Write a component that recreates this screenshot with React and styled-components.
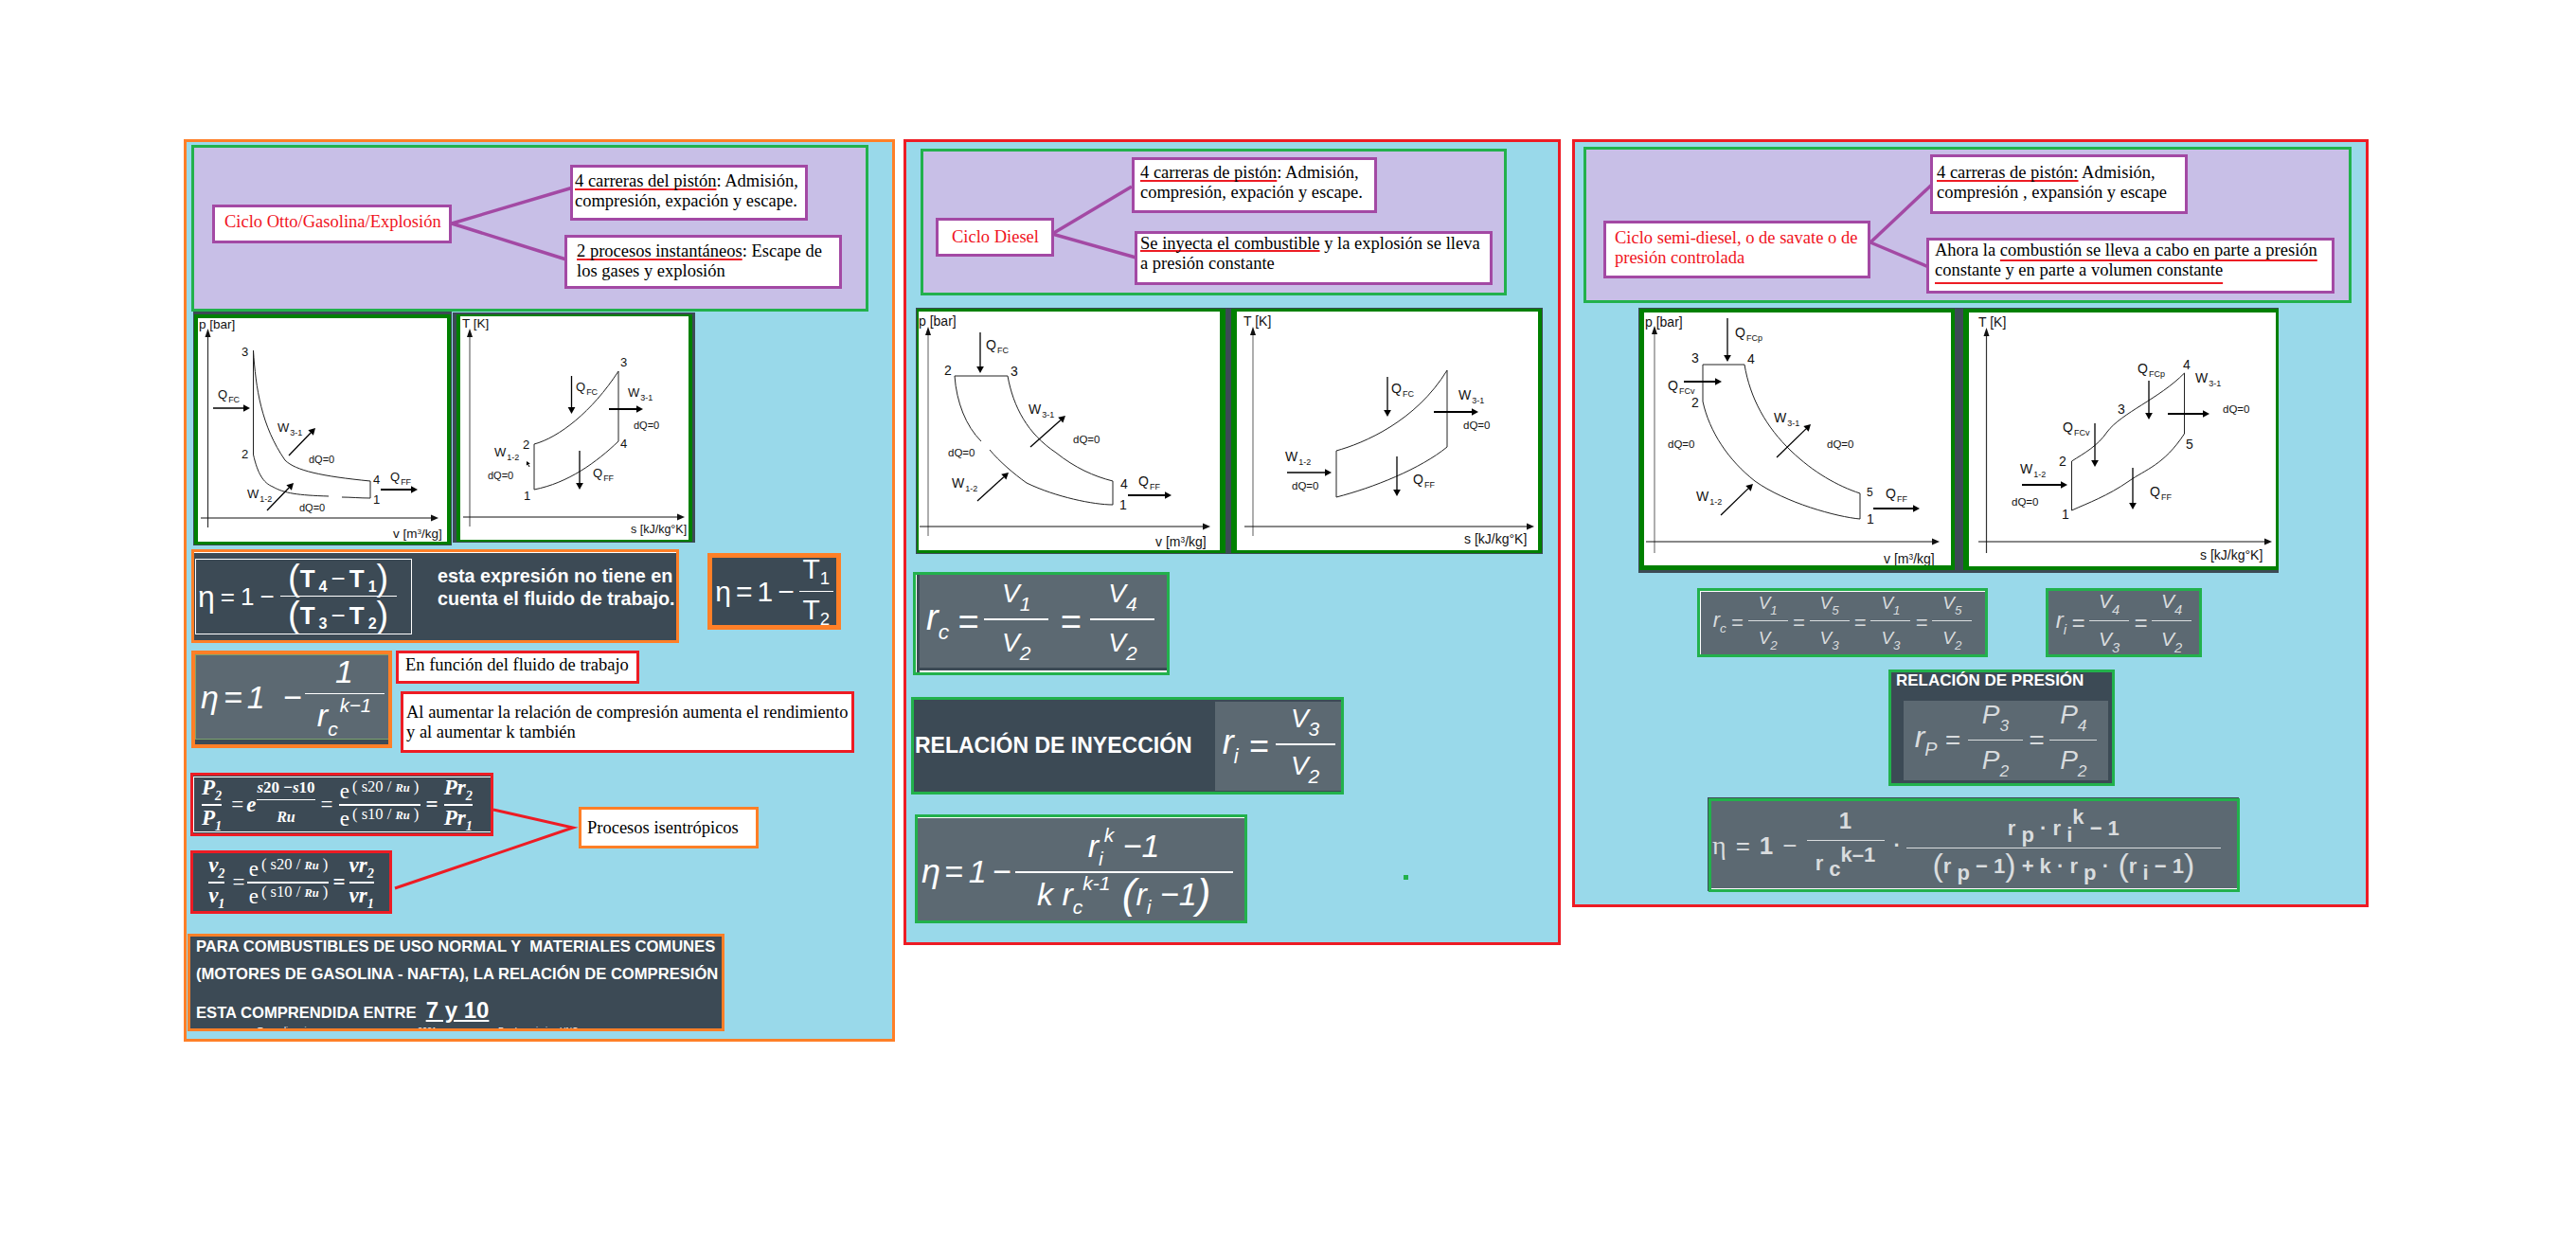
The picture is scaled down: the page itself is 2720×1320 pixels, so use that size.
import React from "react";
import styled, { createGlobalStyle } from "styled-components";

const ORANGE = "#ff7f27";
const RED = "#ed1c24";
const GREEN = "#22b14c";
const PURPLE = "#a349a4";
const DARK = "#3c4a55";
const LIGHT = "#5c6972";
const GRAY = "#d9dcde";

const GlobalStyle = createGlobalStyle`
  body {
    margin: 0;
    background: #ffffff;
    font-family: "Liberation Serif", serif;
  }
`;

const Board = styled.div`
  display: flex;
  align-items: flex-start;
  width: 2720px;
  height: 1320px;
  padding: 147px 0 0 194px;
  box-sizing: border-box;
  overflow: hidden;
`;

const Panel = styled.section`
  position: relative;
  flex: none;
  width: ${(p) => p.$w}px;
  height: ${(p) => p.$h}px;
  margin-left: ${(p) => p.$ml || 0}px;
  box-sizing: border-box;
  background: #99d9ea;
  border: 3px solid ${(p) => p.$color};
`;

const Header = styled.div`
  position: relative;
  width: ${(p) => p.$w}px;
  height: ${(p) => p.$h}px;
  margin: ${(p) => p.$mt}px 0 0 ${(p) => p.$ml}px;
  box-sizing: border-box;
  background: #c8bfe7;
  border: 3px solid ${GREEN};
`;

const Links = styled.svg`
  position: absolute;
  top: 0;
  left: 0;
  pointer-events: none;
`;

const MapNode = styled.div`
  position: absolute;
  left: ${(p) => p.$x}px;
  top: ${(p) => p.$y}px;
  width: ${(p) => p.$w}px;
  height: ${(p) => p.$h}px;
  box-sizing: border-box;
  padding: ${(p) => p.$pad};
  background: #ffffff;
  border: 3px solid ${PURPLE};
  font-size: 18.5px;
  line-height: 21px;
  color: ${(p) => (p.$title ? "#f0141e" : "#000000")};
  white-space: nowrap;
`;

const Marked = styled.span`
  text-decoration: underline ${RED} 2px;
  text-underline-offset: ${(p) => p.$offset || 2}px;
  text-decoration-skip-ink: none;
`;

const Row = styled.div`
  display: flex;
  align-items: flex-start;
  margin: ${(p) => p.$mt || 0}px 0 0 ${(p) => p.$ml || 0}px;
`;

const Column = styled.div`
  display: flex;
  flex-direction: column;
  align-items: flex-start;
  margin-left: ${(p) => p.$ml || 0}px;
`;

const GraphFrame = styled.div`
  flex: none;
  margin-top: ${(p) => p.$mt || 0}px;
  margin-left: ${(p) => p.$ml || 0}px;
  padding: ${(p) => p.$pad};
  background: ${DARK};
`;

const GraphCanvas = styled.div`
  background: #ffffff;
  border-style: solid;
  border-color: #008000;
  border-width: ${(p) => p.$edge};
  svg {
    display: block;
  }
  text {
    font-family: "Liberation Sans", sans-serif;
    fill: #111111;
  }
`;

const EquationBox = styled.div`
  flex: none;
  display: flex;
  align-items: ${(p) => p.$align || "center"};
  justify-content: ${(p) => p.$justify || "center"};
  width: ${(p) => p.$w}px;
  height: ${(p) => p.$h}px;
  margin-top: ${(p) => p.$mt || 0}px;
  margin-left: ${(p) => p.$ml || 0}px;
  padding: ${(p) => p.$pad || 0};
  box-sizing: border-box;
  overflow: hidden;
  background: ${(p) => p.$bg || DARK};
  border: ${(p) => p.$bw || 3}px solid ${(p) => p.$color};
  box-shadow: ${(p) => p.$shadow || "none"};
  color: #ffffff;
`;

const Outline = styled.div`
  flex: none;
  display: flex;
  align-items: center;
  justify-content: ${(p) => p.$justify || "center"};
  width: ${(p) => p.$w}px;
  height: ${(p) => p.$h}px;
  margin-left: ${(p) => p.$ml || 0}px;
  padding: ${(p) => p.$pad || 0};
  box-sizing: border-box;
  background: ${(p) => p.$bg || "transparent"};
  border: 1px solid ${(p) => p.$color || "#ffffff"};
`;

const Note = styled.div`
  flex: none;
  width: ${(p) => p.$w}px;
  height: ${(p) => p.$h}px;
  margin-top: ${(p) => p.$mt || 0}px;
  margin-left: ${(p) => p.$ml || 0}px;
  padding: ${(p) => p.$pad};
  box-sizing: border-box;
  background: #ffffff;
  border: 3px solid ${(p) => p.$color};
  font-size: 18.5px;
  line-height: 21px;
  color: #000000;
  white-space: nowrap;
`;

const Remark = styled.p`
  margin: 0 0 20px 27px;
  font: bold 19.8px/24px "Liberation Sans", sans-serif;
  white-space: nowrap;
`;

const BoldLabel = styled.div`
  flex: none;
  margin: ${(p) => p.$margin || 0};
  font: bold ${(p) => p.$size}px/1 "Liberation Sans", sans-serif;
  white-space: nowrap;
`;

const Banner = styled.div`
  position: relative;
  width: 567px;
  height: 103px;
  margin: 21px 0 0 1px;
  padding-left: 6px;
  box-sizing: border-box;
  overflow: hidden;
  background: ${DARK};
  border: 3px solid ${ORANGE};
  color: #ffffff;
  font: bold 16.6px "Liberation Sans", sans-serif;
  white-space: pre;
`;

const BannerLine = styled.div`
  height: ${(p) => p.$h}px;
  line-height: ${(p) => p.$h}px;
`;

const Range = styled.span`
  font-size: 24px;
  text-decoration: underline;
  margin-left: 10px;
`;

const Footer = styled.div`
  position: absolute;
  left: 71px;
  bottom: -7px;
  display: flex;
  font: 9px/10px "Liberation Sans", sans-serif;
`;

const FooterItem = styled.span`
  width: ${(p) => p.$w}px;
`;

const Speck = styled.div`
  position: absolute;
  left: 525px;
  top: 774px;
  width: 5px;
  height: 5px;
  background: ${GREEN};
`;

/* formula parts */
const Formula = styled.div`
  display: flex;
  align-items: center;
  flex: none;
  gap: ${(p) => p.$gap || 0}px;
  color: ${(p) => p.$color || "#ffffff"};
  font-family: ${(p) => (p.$serif ? '"Liberation Serif", serif' : '"Liberation Sans", sans-serif')};
  font-size: ${(p) => p.$size}px;
  font-style: ${(p) => (p.$italic ? "italic" : "normal")};
  font-weight: ${(p) => (p.$bold ? "bold" : "normal")};
  line-height: 1;
  white-space: pre;
`;

const Term = styled.span`
  display: inline-block;
  white-space: pre;
  margin: ${(p) => p.$margin || 0};
  font-size: ${(p) => p.$size || "inherit"};
  font-weight: ${(p) => (p.$thin ? "normal" : "inherit")};
  font-family: ${(p) => (p.$serif ? '"Liberation Serif", serif' : "inherit")};
`;

const Sub = styled.span`
  font-size: ${(p) => p.$s || 0.62}em;
  vertical-align: ${(p) => p.$v || -0.45}em;
  margin-left: ${(p) => p.$ml || 0}px;
`;

const Sup = styled.span`
  font-size: ${(p) => p.$s || 0.62}em;
  vertical-align: ${(p) => p.$v || 0.75}em;
  margin-left: ${(p) => p.$ml || 0}px;
`;

const Frac = styled.span`
  display: inline-flex;
  flex-direction: column;
  align-items: center;
  flex: none;
  min-width: ${(p) => p.$w || 0}px;
  margin: ${(p) => p.$margin || 0};
  font-size: ${(p) => p.$size || "inherit"};
`;

const Top = styled.span`
  display: block;
  padding-bottom: ${(p) => p.$gap ?? 3}px;
  white-space: pre;
`;

const Bottom = styled.span`
  display: block;
  align-self: stretch;
  text-align: center;
  padding-top: ${(p) => p.$gap ?? 3}px;
  border-top: ${(p) => p.$line || 2}px solid currentColor;
  white-space: pre;
`;

const Paren = styled.span`
  font-size: ${(p) => p.$size}px;
  font-weight: normal;
  vertical-align: ${(p) => p.$v || -0.08}em;
`;

/* chart parts */
const Arrow = ({ from, to, width = 1.3, head = 7 }) => {
  const a = Math.atan2(to[1] - from[1], to[0] - from[0]);
  const bx = to[0] - Math.cos(a) * head;
  const by = to[1] - Math.sin(a) * head;
  const nx = -Math.sin(a) * head * 0.55;
  const ny = Math.cos(a) * head * 0.55;
  return (
    <g>
      <line x1={from[0]} y1={from[1]} x2={bx} y2={by} stroke="#000" strokeWidth={width} />
      <polygon points={`${to[0]},${to[1]} ${bx + nx},${by + ny} ${bx - nx},${by - ny}`} fill="#000" />
    </g>
  );
};

const Label = ({ x, y, main, sub, size = 13, subSize = 9 }) => (
  <text x={x} y={y} fontSize={size}>
    {main}
    {sub && (
      <tspan dx="1" dy="4" fontSize={subSize}>
        {sub}
      </tspan>
    )}
  </text>
);

const Curve = ({ d, color = "#222", width = 1 }) => <path d={d} fill="none" stroke={color} strokeWidth={width} />;

const Axes = ({ vx, vTop, vBottom, hy, hLeft, hRight, color = "#333", w = 1.2 }) => (
  <g>
    <line x1={vx} y1={vTop + 5} x2={vx} y2={vBottom} stroke={color} strokeWidth={w} />
    <polygon points={`${vx},${vTop} ${vx - 3},${vTop + 9} ${vx + 3},${vTop + 9}`} fill="#111" />
    <line x1={hLeft} y1={hy} x2={hRight - 5} y2={hy} stroke="#111" strokeWidth="1" />
    <polygon points={`${hRight},${hy} ${hRight - 8},${hy - 3.5} ${hRight - 8},${hy + 3.5}`} fill="#111" />
  </g>
);

const Graph = ({ pad, edge, box, mt, ml, children }) => (
  <GraphFrame $pad={pad} $mt={mt} $ml={ml}>
    <GraphCanvas $edge={edge}>
      <svg width={box[2]} height={box[3]} viewBox={box.join(" ")}>
        {children}
      </svg>
    </GraphCanvas>
  </GraphFrame>
);

const VolumeLabel = ({ x, y, size }) => (
  <text x={x} y={y} fontSize={size}>
    v [m<tspan dy="-4" fontSize={size * 0.6}>3</tspan>
    <tspan dy="4">/kg]</tspan>
  </text>
);

const OttoPressure = () => (
  <Graph pad="3px 1px 1px 1px" edge="4px 4px 3px 4px" box={[209, 336, 263, 236]}>
    <Axes vx={219.5} vTop={347} vBottom={557} hy={547} hLeft={212} hRight={463} />
    <Label x={210} y={347} main="p [bar]" size={13.5} />
    <Label x={255} y={376} main="3" />
    <Label x={255} y={484} main="2" />
    <Label x={394} y={511} main="4" />
    <Label x={394} y={532} main="1" />
    <Curve d="M267.5 370V480" />
    <Curve d="M267.5 370C270 410 276 450 301 486C312 497 340 503 391 508V526C380 526 370 525 361 525" />
    <Curve d="M267.5 480C272 500 278 510 288 514C300 521 315 523 347 524" />
    <Label x={230} y={421} main="Q" sub="FC" />
    <Arrow from={[225, 431]} to={[264, 431]} width={1.5} />
    <Label x={293} y={456} main="W" sub="3-1" />
    <Arrow from={[305, 481]} to={[333, 452]} />
    <Label x={326} y={489} main="dQ=0" size={11} />
    <Label x={412} y={508} main="Q" sub="FF" />
    <Arrow from={[402, 517]} to={[441, 517]} width={2} />
    <Label x={261} y={526} main="W" sub="1-2" />
    <Arrow from={[282, 539]} to={[310, 510]} />
    <Label x={316} y={540} main="dQ=0" size={11} />
    <VolumeLabel x={415} y={568} size={13.5} />
  </Graph>
);

const OttoTemperature = () => (
  <Graph pad="2px 3px 1px 4px" edge="2px 4px 2px 4px" box={[486, 334, 241, 236]} ml={1} mt={1}>
    <Axes vx={496} vTop={347} vBottom={556} hy={546} hLeft={489} hRight={723} color="#666" />
    <Label x={488} y={346} main="T [K]" size={13.5} />
    <Label x={655} y={387} main="3" />
    <Label x={552} y={474} main="2" />
    <Label x={655} y={473} main="4" />
    <Label x={553} y={528} main="1" />
    <Curve d="M564 469C590 462 625 435 653 392V466C630 488 600 510 564 517Z" />
    <Label x={608} y={413} main="Q" sub="FC" />
    <Arrow from={[603.5, 397]} to={[603.5, 437]} />
    <Label x={663} y={419} main="W" sub="3-1" />
    <Arrow from={[643, 432]} to={[679, 432]} width={2} />
    <Label x={669} y={453} main="dQ=0" size={11} />
    <Label x={522} y={482} main="W" sub="1-2" />
    <Arrow from={[559, 493]} to={[556, 487]} width={1} head={4} />
    <Label x={515} y={506} main="dQ=0" size={11} />
    <Arrow from={[612, 476]} to={[612, 517]} />
    <Label x={626} y={504} main="Q" sub="FF" />
    <Label x={666} y={563} main="s [kJ/kg°K]" size={12.5} />
  </Graph>
);

const DieselPressure = () => (
  <Graph pad="1px 4px 1px 1px" edge="3px 6px 3px 2px" box={[970, 329, 318, 252]}>
    <Axes vx={980} vTop={345} vBottom={566} hy={556} hLeft={971} hRight={1278} color="#777" />
    <Label x={970} y={344} main="p [bar]" size={14} />
    <Label x={997} y={396} main="2" size={14} />
    <Label x={1067} y={397} main="3" size={14} />
    <Curve d="M1008 397H1064C1070 430 1085 458 1115 478C1135 494 1155 503 1175 508V533C1155 533 1115 525 1084 510C1070 500 1055 487 1045 475" />
    <Curve d="M1008 397C1010 425 1020 450 1036 466" />
    <Arrow from={[1035, 351]} to={[1035, 394]} />
    <Label x={1041} y={369} main="Q" sub="FC" size={14} />
    <Label x={1086} y={437} main="W" sub="3-1" size={14} />
    <Arrow from={[1088, 472]} to={[1125, 439]} />
    <Label x={1133} y={468} main="dQ=0" size={11.5} />
    <Label x={1001} y={482} main="dQ=0" size={11.5} />
    <Label x={1005} y={515} main="W" sub="1-2" size={14} />
    <Arrow from={[1032, 529]} to={[1065, 499]} />
    <Label x={1183} y={516} main="4" size={14} />
    <Label x={1182} y={538} main="1" size={14} />
    <Label x={1202} y={513} main="Q" sub="FF" size={14} />
    <Arrow from={[1191, 523]} to={[1237, 523]} width={2} />
    <VolumeLabel x={1220} y={577} size={14} />
  </Graph>
);

const DieselTemperature = () => (
  <Graph pad="1px 1px 1px 2px" edge="3px 4px 3px 6px" box={[1306, 329, 318, 252]}>
    <Axes vx={1323} vTop={345} vBottom={566} hy={556} hLeft={1314} hRight={1620} color="#777" />
    <Label x={1313} y={344} main="T [K]" size={14} />
    <Curve d="M1411 476C1440 468 1495 445 1528 391V472C1500 495 1450 515 1411 525Z" />
    <Arrow from={[1465, 398]} to={[1465, 440]} />
    <Label x={1469} y={415} main="Q" sub="FC" size={14} />
    <Label x={1540} y={422} main="W" sub="3-1" size={14} />
    <Arrow from={[1514, 435]} to={[1561, 435]} width={2} />
    <Label x={1545} y={453} main="dQ=0" size={11.5} />
    <Label x={1357} y={487} main="W" sub="1-2" size={14} />
    <Arrow from={[1359, 499]} to={[1406, 499]} />
    <Label x={1364} y={517} main="dQ=0" size={11.5} />
    <Arrow from={[1475, 482]} to={[1475, 524]} />
    <Label x={1492} y={511} main="Q" sub="FF" size={14} />
    <Label x={1546} y={574} main="s [kJ/kg°K]" size={14} />
  </Graph>
);

const SemiPressure = () => (
  <Graph pad="1px 8px 3px 1px" edge="4px 4px 5px 5px" box={[1736, 329, 324, 267]}>
    <Axes vx={1747} vTop={343} vBottom={583} hy={571} hLeft={1738} hRight={2048} color="#777" />
    <Label x={1737} y={344} main="p [bar]" size={14} />
    <Label x={1786} y={382} main="3" size={14} />
    <Label x={1845} y={383} main="4" size={14} />
    <Label x={1786} y={429} main="2" size={14} />
    <Curve d="M1798 423V384H1842C1848 420 1865 450 1891 475C1915 498 1940 512 1964 520V547C1940 545 1885 530 1853 507C1825 485 1805 455 1798 423" />
    <Arrow from={[1824, 335]} to={[1824, 381]} />
    <Label x={1832} y={355} main="Q" sub="FCp" size={14} />
    <Label x={1761} y={411} main="Q" sub="FCv" size={14} />
    <Arrow from={[1778, 402]} to={[1818, 402]} width={2} />
    <Label x={1873} y={445} main="W" sub="3-1" size={14} />
    <Arrow from={[1876, 482]} to={[1912, 447]} />
    <Label x={1929} y={472} main="dQ=0" size={11.5} />
    <Label x={1761} y={472} main="dQ=0" size={11.5} />
    <Label x={1791} y={528} main="W" sub="1-2" size={14} />
    <Arrow from={[1817, 543]} to={[1851, 510]} />
    <Label x={1971} y={523} main="5" size={12} />
    <Label x={1971} y={552} main="1" size={14} />
    <Label x={1991} y={525} main="Q" sub="FF" size={14} />
    <Arrow from={[1978, 536]} to={[2027, 536]} width={2} />
    <VolumeLabel x={1989} y={594} size={14} />
  </Graph>
);

const SemiTemperature = () => (
  <Graph pad="1px 0 3px 1px" edge="4px 3px 4px 6px" box={[2079, 329, 324, 268]}>
    <Axes vx={2097.5} vTop={345} vBottom={583} hy={571} hLeft={2089} hRight={2399} />
    <Label x={2089} y={344} main="T [K]" size={14} />
    <Curve d="M2187.5 486C2200 478 2215 470 2225 455C2240 435 2280 420 2306.5 393V457C2285 490 2265 495 2248 507C2225 523 2205 530 2187.5 538Z" />
    <Label x={2305} y={389} main="4" size={14} />
    <Label x={2257} y={393} main="Q" sub="FCp" size={14} />
    <Arrow from={[2269, 401]} to={[2269, 442]} />
    <Label x={2318} y={403} main="W" sub="3-1" size={14} />
    <Label x={2236} y={436} main="3" size={14} />
    <Arrow from={[2289, 436]} to={[2333, 436]} width={2} />
    <Label x={2347} y={435} main="dQ=0" size={11.5} />
    <Label x={2178} y={455} main="Q" sub="FCv" size={14} />
    <Arrow from={[2212, 446]} to={[2212, 492]} />
    <Label x={2174} y={491} main="2" size={14} />
    <Label x={2308} y={473} main="5" size={14} />
    <Label x={2133} y={499} main="W" sub="1-2" size={14} />
    <Arrow from={[2135, 511]} to={[2183, 511]} width={2} />
    <Label x={2124} y={533} main="dQ=0" size={11.5} />
    <Label x={2177} y={547} main="1" size={14} />
    <Arrow from={[2252, 493]} to={[2252, 537]} />
    <Label x={2270} y={523} main="Q" sub="FF" size={14} />
    <Label x={2323} y={590} main="s [kJ/kg°K]" size={14} />
  </Graph>
);

const ConceptLinks = ({ w, h, lines }) => (
  <Links width={w} height={h} viewBox={`0 0 ${w} ${h}`}>
    {lines.map((l) => (
      <line key={l.join()} x1={l[0]} y1={l[1]} x2={l[2]} y2={l[3]} stroke={PURPLE} strokeWidth="3.5" />
    ))}
  </Links>
);

const TEPair = ({ a, b }) => (
  <>
    <Paren $size={38}>(</Paren>
    <b>T</b>
    <Sub $ml={4} $v={-0.3}>
      <b>{a}</b>
    </Sub>
    <Term $margin="0 4px">−</Term>
    <b>T</b>
    <Sub $ml={4} $v={-0.3}>
      <b>{b}</b>
    </Sub>
    <Paren $size={38}>)</Paren>
  </>
);

const ExpPart = ({ a }) => (
  <>
    e
    <Sup $s={0.72} $v={0.45} $ml={3}>
      ( {a} / <i><b style={{ fontSize: "0.75em" }}>Ru</b></i> )
    </Sup>
  </>
);

const IsoWrap = styled.div`
  position: relative;
  display: flex;
  align-items: flex-start;
  height: 149px;
  margin: 21px 0 0 4px;
`;

const IsoGroup = () => (
  <IsoWrap>
    <Links width={410} height={149} viewBox="201 816 410 149">
      <polyline points="521,855 605,874 417,938" fill="none" stroke={RED} strokeWidth="3" />
    </Links>
    <Column>
      <EquationBox $w={320} $h={67} $color={RED} $justify="flex-start">
        <Outline $w={316} $h={59} $justify="flex-start">
          <Formula $size={23} $serif $gap={3}>
            <Frac $margin="0 0 0 8px">
              <Top $gap={1}><b><i>P<Sub>2</Sub></i></b></Top>
              <Bottom $gap={1}><b><i>P<Sub>1</Sub></i></b></Bottom>
            </Frac>
            <Term $margin="0 0 0 7px">=</Term>
            <Term $margin="0 -2px 0 0"><b><i>e</i></b></Term>
            <Frac $w={60} $margin="0 0 10px 0">
              <Top $gap={3}><Term $size="17px"><b><i>s</i>20 −<i>s</i>10</b></Term></Top>
              <Bottom $gap={4} $line={1}><Term $size="16px"><b><i>Ru</i></b></Term></Bottom>
            </Frac>
            <Term $margin="0 3px">=</Term>
            <Frac $w={86}>
              <Top $gap={1}><ExpPart a="s20" /></Top>
              <Bottom $gap={1}><ExpPart a="s10" /></Bottom>
            </Frac>
            <Term $margin="0 3px"><b>=</b></Term>
            <Frac>
              <Top $gap={1}><b><i>Pr<Sub>2</Sub></i></b></Top>
              <Bottom $gap={1}><b><i>Pr<Sub>1</Sub></i></b></Bottom>
            </Frac>
          </Formula>
        </Outline>
      </EquationBox>
      <EquationBox $w={213} $h={67} $mt={15} $color={RED}>
        <Formula $size={23} $serif $gap={3}>
          <Frac>
            <Top $gap={1}><b><i>v<Sub>2</Sub></i></b></Top>
            <Bottom $gap={1}><b><i>v<Sub>1</Sub></i></b></Bottom>
          </Frac>
          <Term $margin="0 0 0 5px">=</Term>
          <Frac $w={86}>
            <Top $gap={1}><ExpPart a="s20" /></Top>
            <Bottom $gap={1}><ExpPart a="s10" /></Bottom>
          </Frac>
          <Term $margin="0 1px"><b>=</b></Term>
          <Frac>
            <Top $gap={1}><b><i>vr<Sub>2</Sub></i></b></Top>
            <Bottom $gap={1}><b><i>vr<Sub>1</Sub></i></b></Bottom>
          </Frac>
        </Formula>
      </EquationBox>
    </Column>
    <Note $w={190} $h={44} $color={ORANGE} $mt={36} $ml={90} $pad="9px 0 0 6px">
      Procesos isentrópicos
    </Note>
  </IsoWrap>
);

const OttoColumn = () => (
  <Panel $w={751} $h={953} $color={ORANGE}>
    <Header $w={715} $h={176} $mt={3} $ml={5}>
      <ConceptLinks w={709} h={170} lines={[[272, 80, 400, 42], [272, 80, 396, 119]]} />
      <MapNode $x={19} $y={60} $w={253} $h={41} $title $pad="5px 0 0 10px">
        Ciclo Otto/Gasolina/Explosión
      </MapNode>
      <MapNode $x={397} $y={18} $w={251} $h={59} $pad="4px 0 0 2px">
        <Marked>4 carreras del pistón</Marked>: Admisión,
        <br />
        compresión, expación y escape.
      </MapNode>
      <MapNode $x={391} $y={92} $w={293} $h={57} $pad="4px 0 0 10px">
        <Marked>2 procesos instantáneos</Marked>: Escape de
        <br />
        los gases y explosión
      </MapNode>
    </Header>
    <Row $ml={7}>
      <OttoPressure />
      <OttoTemperature />
    </Row>
    <Row $mt={4} $ml={5}>
      <EquationBox $w={515} $h={99} $color={ORANGE} $justify="flex-start" $shadow="inset 0 1px #fff">
        <Outline $w={229} $h={80} $ml={1} $justify="flex-start" $pad="0 0 0 2px">
          <Formula $size={26} $gap={6}>
            <Term $size="32px">η</Term>
            <Term>=</Term>
            <Term>1</Term>
            <Term>−</Term>
            <Frac $w={123}>
              <Top $gap={0}>
                <TEPair a="4" b="1" />
              </Top>
              <Bottom $gap={0} $line={1}>
                <TEPair a="3" b="2" />
              </Bottom>
            </Frac>
          </Formula>
        </Outline>
        <Remark>
          esta expresión no tiene en
          <br />
          cuenta el fluido de trabajo.
        </Remark>
      </EquationBox>
      <EquationBox $w={141} $h={81} $bw={5} $ml={30} $mt={4} $color={ORANGE}>
        <Formula $size={30} $gap={5}>
          <Term>η</Term>
          <Term>=</Term>
          <Term>1</Term>
          <Term>−</Term>
          <Frac $w={36}>
            <Top $gap={4}>
              T<Sub $v={-0.3}>1</Sub>
            </Top>
            <Bottom $gap={4} $line={1}>
              T<Sub $v={-0.3}>2</Sub>
            </Bottom>
          </Frac>
        </Formula>
      </EquationBox>
    </Row>
    <Row $mt={8} $ml={5}>
      <EquationBox $w={212} $h={103} $bw={4} $color={ORANGE} $justify="flex-start" $align="flex-start">
        <Outline $w={205} $h={90} $bg={LIGHT} $color="#7da36f" $justify="flex-start" $pad="0 0 0 5px">
          <Formula $size={34} $italic $gap={5}>
            <Term>η</Term>
            <Term>=</Term>
            <Term $margin="0 14px 0 0">1</Term>
            <Term>−</Term>
            <Frac $w={84} $margin="0 0 0 -2px">
              <Top $gap={6}>1</Top>
              <Bottom $gap={2} $line={1}>
                r<Sub>c</Sub>
                <Sup $ml={2} $s={0.6}>k−1</Sup>
              </Bottom>
            </Frac>
          </Formula>
        </Outline>
      </EquationBox>
      <Column $ml={4}>
        <Note $w={257} $h={35} $color={RED} $pad="2px 0 0 7px">
          En función del fluido de trabajo
        </Note>
        <Note $w={479} $h={65} $color={RED} $mt={8} $ml={5} $pad="9px 0 0 3px">
          Al aumentar la relación de compresión aumenta el rendimiento
          <br />y al aumentar k también
        </Note>
      </Column>
    </Row>
    <IsoGroup />
    <Banner>
      <BannerLine $h={22}>PARA COMBUSTIBLES DE USO NORMAL Y  MATERIALES COMUNES</BannerLine>
      <BannerLine $h={36}>(MOTORES DE GASOLINA - NAFTA), LA RELACIÓN DE COMPRESIÓN</BannerLine>
      <BannerLine $h={40}>
        ESTA COMPRENDIDA ENTRE<Range>7 y 10</Range>
      </BannerLine>
      <Footer>
        <FooterItem $w={169}>Termodinamica</FooterItem>
        <FooterItem $w={85}>2021</FooterItem>
        <FooterItem $w={110}>Fac Ingenieria - UNCuyo</FooterItem>
      </Footer>
    </Banner>
  </Panel>
);

const DieselColumn = () => (
  <Panel $w={694} $h={851} $ml={9} $color={RED}>
    <Header $w={619} $h={155} $mt={7} $ml={15}>
      <ConceptLinks w={613} h={149} lines={[[136, 87, 220, 37], [136, 87, 228, 113]]} />
      <MapNode $x={13} $y={70} $w={125} $h={41} $title $pad="7px 0 0 14px">
        Ciclo Diesel
      </MapNode>
      <MapNode $x={220} $y={6} $w={259} $h={59} $pad="3px 0 0 6px">
        <Marked>4 carreras de pistón</Marked>: Admisión,
        <br />
        compresión, expación y escape.
      </MapNode>
      <MapNode $x={223} $y={84} $w={378} $h={57} $pad="0 0 0 3px">
        <Marked $offset={1}>Se inyecta el combustible</Marked> y la explosión se lleva
        <br />a presión constante
      </MapNode>
    </Header>
    <Row $mt={13} $ml={10}>
      <DieselPressure />
      <DieselTemperature />
    </Row>
    <EquationBox
      $w={271}
      $h={109}
      $mt={19}
      $ml={7}
      $color={GREEN}
      $bg={LIGHT}
      $justify="flex-start"
      $pad="0 0 4px 11px"
      $shadow={`inset 1px 0 #fff, inset 4px 0 ${DARK}, inset 0 -2px #fff, inset 0 -5px ${DARK}`}
    >
      <Formula $size={38} $italic $gap={5}>
        <Term>r<Sub $s={0.6}>c</Sub></Term>
        <Term $margin="0 1px 0 4px">=</Term>
        <Frac $w={68} $size="28px">
          <Top $gap={4}>V<Sub $s={0.75}>1</Sub></Top>
          <Bottom $gap={10}>V<Sub $s={0.75}>2</Sub></Bottom>
        </Frac>
        <Term $margin="0 5px 0 7px">=</Term>
        <Frac $w={68} $size="28px">
          <Top $gap={4}>V<Sub $s={0.75}>4</Sub></Top>
          <Bottom $gap={10}>V<Sub $s={0.75}>2</Sub></Bottom>
        </Frac>
      </Formula>
    </EquationBox>
    <EquationBox $w={457} $h={103} $mt={23} $ml={5} $color={GREEN} $justify="flex-start" $pad="0 0 0 1px">
      <BoldLabel $size={23}>RELACIÓN DE INYECCIÓN</BoldLabel>
      <Outline $w={135} $h={94} $ml={24} $bg={LIGHT} $color={LIGHT}>
        <Formula $size={36} $italic $gap={5}>
          <Term>r<Sub $s={0.6}>i</Sub></Term>
          <Term $margin="0 2px 0 6px">=</Term>
          <Frac $w={63} $size="28px">
            <Top $gap={4}>V<Sub $s={0.75}>3</Sub></Top>
            <Bottom $gap={8}>V<Sub $s={0.75}>2</Sub></Bottom>
          </Frac>
        </Formula>
      </Outline>
    </EquationBox>
    <EquationBox
      $w={351}
      $h={115}
      $mt={21}
      $ml={9}
      $color={GREEN}
      $bg={LIGHT}
      $justify="flex-start"
      $pad="4px 0 0 4px"
      $shadow="inset 0 1px #fff"
    >
      <Formula $size={34} $italic $gap={6}>
        <Term $size="36px">η</Term>
        <Term $margin="0 0 0 -2px">=</Term>
        <Term>1</Term>
        <Term $margin="0 -2px 0 0">−</Term>
        <Frac $w={230}>
          <Top $gap={3}>
            r<Sub>i</Sub>
            <Sup $ml={1}>k</Sup> −1
          </Top>
          <Bottom $gap={0}>
            k r<Sub>c</Sub>
            <Sup>k-1</Sup>
            <Paren $size={44}> (</Paren>r<Sub>i</Sub> −1<Paren $size={44}>)</Paren>
          </Bottom>
        </Frac>
      </Formula>
    </EquationBox>
    <Speck />
  </Panel>
);

const GrayRatio = ({ top, bottom, size = 19 }) => (
  <Frac $w={42} $size={`${size}px`}>
    <Top $gap={4}>V<Sub $s={0.7}>{top}</Sub></Top>
    <Bottom $gap={8} $line={1}>V<Sub $s={0.7}>{bottom}</Sub></Bottom>
  </Frac>
);

const PressureCard = styled.div`
  width: 239px;
  height: 123px;
  margin: 13px 0 0 331px;
  box-sizing: border-box;
  background: ${DARK};
  border: 3px solid ${GREEN};
  color: #ffffff;
`;

const PressureInner = styled.div`
  display: flex;
  align-items: center;
  justify-content: center;
  width: 216px;
  height: 84px;
  margin: 13px 0 0 13px;
  background: ${LIGHT};
`;

const LowSub = ({ children }) => (
  <Sub $s={1} $v={-0.3}>
    {children}
  </Sub>
);

const SemiColumn = () => (
  <Panel $w={841} $h={811} $ml={12} $color={RED}>
    <Header $w={811} $h={165} $mt={5} $ml={9}>
      <ConceptLinks w={805} h={159} lines={[[300, 98, 369, 33], [300, 98, 364, 125]]} />
      <MapNode $x={18} $y={75} $w={282} $h={61} $title $pad="5px 0 0 9px">
        Ciclo semi-diesel, o de savate o de
        <br />
        presión controlada
      </MapNode>
      <MapNode $x={363} $y={5} $w={272} $h={63} $pad="6px 0 0 4px">
        <Marked>4 carreras de pistón:</Marked> Admisión,
        <br />
        compresión , expansión y escape
      </MapNode>
      <MapNode $x={359} $y={93} $w={431} $h={59} $pad="0 0 0 6px">
        Ahora la <Marked $offset={4}>combustión se lleva a cabo en parte a presión</Marked>
        <br />
        <Marked $offset={7}>constante y en parte a volumen constante</Marked>
      </MapNode>
    </Header>
    <Row $mt={5} $ml={67}>
      <SemiPressure />
      <SemiTemperature />
    </Row>
    <Row $mt={16} $ml={129}>
      <EquationBox $w={307} $h={73} $color={GREEN} $bg={LIGHT} $shadow="inset 0 1px #fff, inset 1px 0 #fff">
        <Formula $size={22} $italic $gap={5} $color={GRAY}>
          <Term>r<Sub>c</Sub></Term>
          <Term>=</Term>
          <GrayRatio top="1" bottom="2" />
          <Term>=</Term>
          <GrayRatio top="5" bottom="3" />
          <Term>=</Term>
          <GrayRatio top="1" bottom="3" />
          <Term>=</Term>
          <GrayRatio top="5" bottom="2" />
        </Formula>
      </EquationBox>
      <EquationBox $w={165} $h={73} $ml={61} $color={GREEN} $bg={LIGHT}>
        <Formula $size={24} $italic $gap={5} $color={GRAY}>
          <Term>r<Sub>i</Sub></Term>
          <Term>=</Term>
          <GrayRatio top="4" bottom="3" size={21} />
          <Term>=</Term>
          <GrayRatio top="4" bottom="2" size={21} />
        </Formula>
      </EquationBox>
    </Row>
    <PressureCard>
      <BoldLabel $size={17} $margin="0 0 0 5px">RELACIÓN DE PRESIÓN</BoldLabel>
      <PressureInner>
        <Formula $size={28} $italic $gap={6} $color={GRAY}>
          <Term $size="32px">r<Sub>P</Sub></Term>
          <Term $margin="0 2px">=</Term>
          <Frac $w={58}>
            <Top $gap={5}>P<Sub>3</Sub></Top>
            <Bottom $gap={7} $line={1}>P<Sub>2</Sub></Bottom>
          </Frac>
          <Term>=</Term>
          <Frac $w={50}>
            <Top $gap={5}>P<Sub>4</Sub></Top>
            <Bottom $gap={7} $line={1}>P<Sub>2</Sub></Bottom>
          </Frac>
        </Formula>
      </PressureInner>
    </PressureCard>
    <EquationBox
      $w={561}
      $h={99}
      $mt={13}
      $ml={141}
      $color={GREEN}
      $bg={LIGHT}
      $justify="flex-start"
      $pad="0 0 0 1px"
      $shadow={`-1px -1px 0 ${DARK}, inset 0 -1px #fff`}
    >
      <Formula $size={22} $bold $gap={10} $color={GRAY}>
        <Term $thin $serif $size="28px">η</Term>
        <Term $thin $size="26px">=</Term>
        <Term $size="26px">1</Term>
        <Term $thin $size="26px">−</Term>
        <Frac $w={82}>
          <Top $gap={8}><Term $size="24px">1</Term></Top>
          <Bottom $gap={4} $line={1}>
            r <LowSub>c</LowSub>
            <Sup $s={1} $v={0.4}>k–1</Sup>
          </Bottom>
        </Frac>
        <Term>·</Term>
        <Frac $w={332} $margin="0 0 0 -4px">
          <Top $gap={2}>
            r <LowSub>p</LowSub> · r <LowSub>i</LowSub>
            <Sup $s={1} $v={0.55}>k</Sup> − 1
          </Top>
          <Bottom $gap={0} $line={1}>
            <Paren $size={34}>(</Paren>r <LowSub>p</LowSub> − 1<Paren $size={34}>)</Paren> + k · r <LowSub>p</LowSub> ·
            <Paren $size={34}> (</Paren>r <LowSub>i</LowSub> − 1<Paren $size={34}>)</Paren>
          </Bottom>
        </Frac>
      </Formula>
    </EquationBox>
  </Panel>
);

export default function App() {
  return (
    <>
      <GlobalStyle />
      <Board>
        <OttoColumn />
        <DieselColumn />
        <SemiColumn />
      </Board>
    </>
  );
}
